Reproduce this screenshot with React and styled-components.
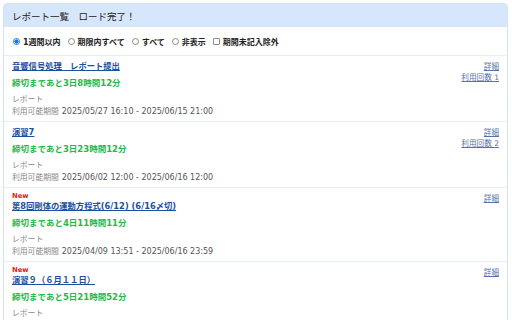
import React from 'react';
import styled, { createGlobalStyle } from 'styled-components';

const GlobalStyle = createGlobalStyle`
  html, body {
    margin: 0;
    padding: 0;
    background: #ffffff;
  }
  body {
    font-family: "DejaVu Sans", "Noto Sans CJK JP", sans-serif;
    color: #333;
  }
`;

const Page = styled.div`
  width: 512px;
  height: 320px;
  overflow: hidden;
  padding: 3px 4px 0 3px;
  box-sizing: border-box;
`;

const Panel = styled.div`
  border: 1px solid #d3e3f6;
  border-radius: 4px 4px 0 0;
  background: #fff;
`;

const PanelHeader = styled.div`
  background: #d6e6fb;
  height: 23px;
  display: flex;
  align-items: center;
  padding: 0 8px;
  font-size: 9.5px;
  color: #222;
  border-radius: 3px 3px 0 0;
`;

const FilterRow = styled.div`
  display: flex;
  align-items: center;
  height: 28px;
  padding: 0 9px;
  gap: 7px;
  border-bottom: 1px solid #e4effa;
  font-size: 8px;
  font-weight: bold;
  color: #222;
`;

const FilterOption = styled.label`
  display: flex;
  align-items: center;
  gap: 3px;
`;

const Check = styled.input`
  appearance: none;
  width: 7px;
  height: 7px;
  margin: 0;
  box-sizing: border-box;
  border: 1px solid #8a8a8a;
  border-radius: ${p => (p.type === 'radio' ? '50%' : '1px')};
  background: #fff;

  &:checked {
    border-color: #1a73e8;
    background: radial-gradient(circle, #1a73e8 0 55%, #fff 60%);
  }
`;

const Item = styled.div`
  display: flex;
  justify-content: space-between;
  padding: 4px 8px 3px 8px;
  border-bottom: 1px solid #e4effa;
`;

const ItemBody = styled.div`
  display: flex;
  flex-direction: column;
`;

const NewMark = styled.div`
  color: #e21b1b;
  font-size: 6.8px;
  font-weight: bold;
  line-height: 7px;
  margin-top: 1px;
`;

const Title = styled.a`
  color: #1b4f9f;
  font-size: 8.3px;
  font-weight: bold;
  line-height: 12px;
  text-decoration: underline;
  align-self: flex-start;
`;

const Deadline = styled.div`
  color: #26b94a;
  font-size: 8.5px;
  font-weight: bold;
  line-height: 12px;
  margin-top: 5px;
`;

const Kind = styled.div`
  color: #888;
  font-size: 7.8px;
  line-height: 12px;
  margin-top: 5px;
`;

const Period = styled.div`
  font-size: 8px;
  line-height: 12px;
  color: #555;
`;

const PeriodLabel = styled.span`
  color: #888;
  font-size: 7.8px;
  margin-right: 3px;
`;

const SideLinks = styled.div`
  display: flex;
  flex-direction: column;
  align-items: flex-end;
  padding-top: 1px;
`;

const SideLink = styled.a`
  color: #5572ad;
  font-size: 7.6px;
  line-height: 11px;
  text-decoration: underline;
`;

const reports = [
  {
    title: '音響信号処理　レポート提出',
    deadline: '締切まであと3日8時間12分',
    period: '2025/05/27 16:10 - 2025/06/15 21:00',
    uses: 1,
  },
  {
    title: '演習7',
    deadline: '締切まであと3日23時間12分',
    period: '2025/06/02 12:00 - 2025/06/16 12:00',
    uses: 2,
  },
  {
    title: '第8回剛体の運動方程式(6/12) (6/16〆切)',
    deadline: '締切まであと4日11時間11分',
    period: '2025/04/09 13:51 - 2025/06/16 23:59',
    isNew: true,
  },
  {
    title: '演習９（６月１１日）',
    deadline: '締切まであと5日21時間52分',
    period: '2025/06/14 10:40 - 2025/06/19 10:40',
    isNew: true,
  },
];

const filters = [
  { label: '1週間以内', type: 'radio', checked: true },
  { label: '期限内すべて', type: 'radio' },
  { label: 'すべて', type: 'radio' },
  { label: '非表示', type: 'radio' },
  { label: '期間未記入除外', type: 'checkbox' },
];

const ReportItem = ({ report }) => (
  <Item>
    <ItemBody>
      {report.isNew && <NewMark>New</NewMark>}
      <Title href="#">{report.title}</Title>
      <Deadline>{report.deadline}</Deadline>
      <Kind>レポート</Kind>
      <Period>
        <PeriodLabel>利用可能期間</PeriodLabel>
        {report.period}
      </Period>
    </ItemBody>
    <SideLinks>
      <SideLink href="#">詳細</SideLink>
      {report.uses && <SideLink href="#">利用回数 {report.uses}</SideLink>}
    </SideLinks>
  </Item>
);

const App = () => (
  <Page>
    <GlobalStyle />
    <Panel>
      <PanelHeader>レポート一覧　ロード完了！</PanelHeader>
      <FilterRow>
        {filters.map((f, idx) => (
          <FilterOption key={idx}>
            <Check
              type={f.type}
              name={f.type === 'radio' ? 'range' : undefined}
              defaultChecked={f.checked}
            />
            {f.label}
          </FilterOption>
        ))}
      </FilterRow>
      {reports.map((r, idx) => (
        <ReportItem key={idx} report={r} />
      ))}
    </Panel>
  </Page>
);

export default App;
